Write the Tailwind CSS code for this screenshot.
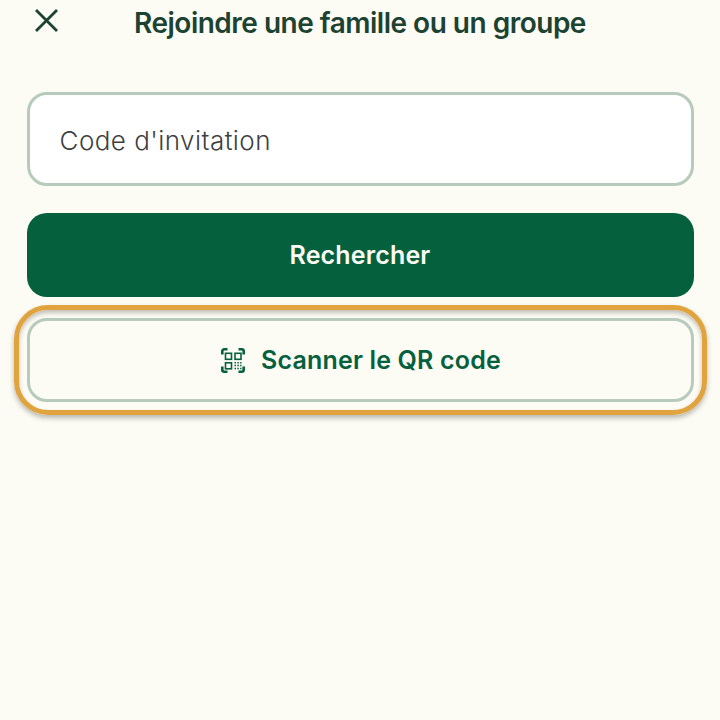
<!DOCTYPE html>
<html lang="fr">

<head>
    <meta charset="UTF-8">
    <meta name="viewport" content="width=device-width, initial-scale=1.0">
    <script src="https://cdn.jsdelivr.net/npm/@tailwindcss/browser@4"></script>
    <title>Rejoindre une famille ou un groupe</title>
</head>

<body class="bg-[#fcfbf4] font-['Inter',sans-serif]">
    <div class="w-[720px] h-[720px] overflow-hidden px-[26.5px]">
        <!-- header -->
        <div class="relative h-[92px]">
            <button class="absolute left-[8px] top-[9px] text-[#1c4231]">
                <svg width="23" height="23" viewBox="0 0 23 23" fill="none" stroke="currentColor" stroke-width="2.8">
                    <path d="M1 1L22 22M22 1L1 22" />
                </svg>
            </button>
            <h1 class="pt-[4px] text-center text-[28px] leading-[38px] font-semibold tracking-[-0.5px] text-[#1c4231]">Rejoindre une famille ou un groupe</h1>
        </div>

        <!-- code field -->
        <div class="h-[94px] flex items-center rounded-[20px] border-[3px] border-[#b7cbbd] bg-white pt-[3px] pl-[30px] text-[26px] font-light tracking-[0.45px] text-[#3f3f3f]">Code d'invitation</div>

        <!-- search -->
        <button class="mt-[27px] w-full h-[84px] pt-[1px] rounded-[20px] bg-[#05613d] text-[25px] font-semibold tracking-[0.15px] text-[#fcfbf4]">Rechercher</button>

        <!-- scan qr, with highlight ring -->
        <div class="relative mt-[21px]">
            <button class="w-full h-[84px] pt-[1px] pl-[2px] flex items-center justify-center gap-[16px] rounded-[20px] border-[3px] border-[#b7cbbd] text-[25px] font-semibold tracking-[0.17px] text-[#05613d]">
                <svg width="24" height="25" viewBox="0 0 24 25" fill="none" stroke="currentColor" stroke-width="1.6">
                    <path stroke-width="2.6" d="M1.3 6.5V3.3a2 2 0 0 1 2-2h3.2M17.5 1.3h3.2a2 2 0 0 1 2 2v3.2M22.7 18.5v3.2a2 2 0 0 1-2 2h-3.2M6.5 23.7H3.3a2 2 0 0 1-2-2v-3.2" />
                    <rect x="4.5" y="5.3" width="6" height="6" />
                    <rect x="14" y="5.3" width="6" height="6" />
                    <rect x="4.5" y="14.8" width="6" height="6" />
                    <path stroke-width="1.5" stroke-dasharray="1.5 1.3" d="M13.5 14.8h7M13.5 17.6h7M13.5 20.4h7" />
                </svg>
                Scanner le QR code
            </button>
            <div class="absolute -left-[13px] -right-[13px] -top-[13px] -bottom-[13px] rounded-[34px] border-[5px] border-[#e0a33e] shadow-[0_3px_5px_rgba(60,60,50,0.35),inset_0_3px_4px_rgba(60,60,50,0.3)]"></div>
        </div>
    </div>
</body>

</html>
